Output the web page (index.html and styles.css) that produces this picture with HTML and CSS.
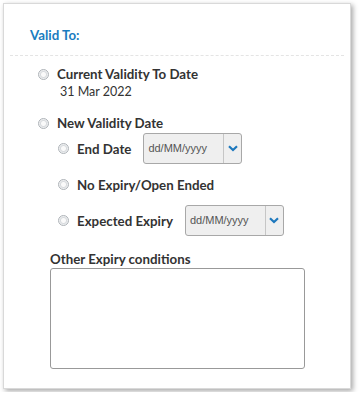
FILE: index.html
```html
<!DOCTYPE html>
<html lang="en">
<head>
    <meta charset="UTF-8">
    <meta name="viewport" content="width=device-width, initial-scale=1.0">
    <title>Valid To</title>
    <link rel="stylesheet" href="styles.css">
</head>
<body>
    <div class="panel">
        <div class="panel-title">Valid To:</div>
        <div class="panel-body">
            <div class="option">
                <label class="radio-row"><input type="radio" name="validity" class="styled-radio"><span>Current Validity To Date</span></label>
                <div class="current-date">31 Mar 2022</div>
            </div>

            <div class="option option-new">
                <label class="radio-row"><input type="radio" name="validity" class="styled-radio"><span>New Validity Date</span></label>
                <div class="sub-options">
                    <div class="sub-row">
                        <label class="radio-row"><input type="radio" name="newValidity" class="styled-radio"><span>End Date</span></label>
                        <div class="date-select">
                            <span class="date-text">dd/MM/yyyy</span>
                            <span class="date-btn">
                                <svg width="10" height="7" viewBox="0 0 10 7"><path d="M1 1.2 L5 5 L9 1.2" fill="none" stroke="#1d78bd" stroke-width="2.2"/></svg>
                            </span>
                        </div>
                    </div>
                    <div class="sub-row">
                        <label class="radio-row"><input type="radio" name="newValidity" class="styled-radio"><span>No Expiry/Open Ended</span></label>
                    </div>
                    <div class="sub-row">
                        <label class="radio-row"><input type="radio" name="newValidity" class="styled-radio"><span>Expected Expiry</span></label>
                        <div class="date-select">
                            <span class="date-text">dd/MM/yyyy</span>
                            <span class="date-btn">
                                <svg width="10" height="7" viewBox="0 0 10 7"><path d="M1 1.2 L5 5 L9 1.2" fill="none" stroke="#1d78bd" stroke-width="2.2"/></svg>
                            </span>
                        </div>
                    </div>
                </div>
            </div>

            <div class="other">
                <label for="otherConditions">Other Expiry conditions</label>
                <textarea id="otherConditions" class="styled-textarea"></textarea>
            </div>
        </div>
    </div>
</body>
</html>
```

FILE: styles.css
```css
body {
    margin: 0;
    padding: 3px;
    background-color: #fff;
    font-family: Lato, "Open Sans", sans-serif;
    font-size: 13.3px;
    line-height: 18px;
    color: #333;
}
.panel {
    width: 348px;
    height: 386px;
    box-sizing: border-box;
    border: 1px solid #d9d9d9;
    padding: 0 6px;
    background-color: #fff;
    box-shadow: 2px 2px 5px rgba(0, 0, 0, 0.35);
}
.panel-title {
    padding: 22px 0 11px 20px;
    border-bottom: 1px dashed #e4e4e4;
    font-weight: 700;
    color: #1a7cc0;
}
.panel-body {
    padding: 9px 0 0 28px;
}
.radio-row {
    display: flex;
    align-items: center;
    font-weight: 700;
}
.styled-radio {
    appearance: none;
    -webkit-appearance: none;
    width: 11px;
    height: 11px;
    margin: 0 8px 0 0;
    border: 1px solid #aeb3b8;
    border-radius: 50%;
    box-sizing: border-box;
    background: radial-gradient(circle, #fafafa 0 2px, #d8dbde 3px, #f4f5f6 4.5px);
    flex-shrink: 0;
}
.current-date {
    padding-left: 22px;
    font-size: 12.5px;
}
.option-new {
    margin-top: 13px;
}
.sub-options {
    display: flex;
    flex-direction: column;
    gap: 5px;
    padding: 1px 0 0 20px;
}
.sub-row {
    display: flex;
    align-items: center;
    height: 31px;
    gap: 12px;
}
.date-select {
    display: flex;
    width: 99px;
    height: 31px;
    box-sizing: border-box;
    border: 1px solid #a8a8a8;
    border-radius: 3px;
    background-color: #efefef;
}
.date-text {
    flex: 1;
    padding-left: 4px;
    font-family: "Liberation Sans", Arial, sans-serif;
    font-size: 11px;
    line-height: 29px;
    color: #555;
}
.date-btn {
    display: flex;
    align-items: center;
    justify-content: center;
    width: 17px;
    border-left: 1px solid #c6c6c6;
}
.other {
    margin: 14px 0 0 12px;
}
.other label {
    display: block;
    font-weight: 700;
}
.styled-textarea {
    display: block;
    width: 255px;
    height: 101px;
    margin: 0;
    box-sizing: border-box;
    border: 1px solid #999;
    border-radius: 3px;
    resize: none;
}
```
